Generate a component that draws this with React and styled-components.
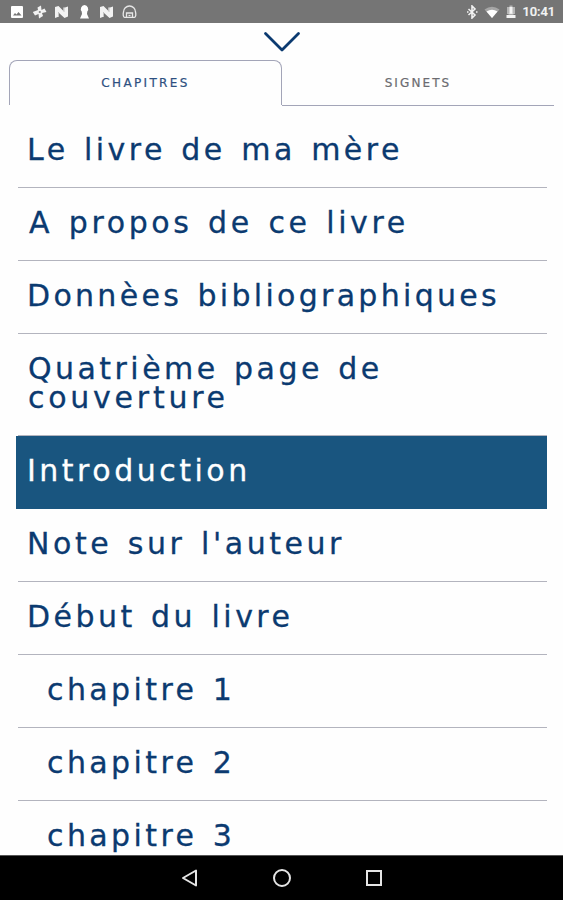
import styled, { createGlobalStyle } from 'styled-components'

const GlobalStyle = createGlobalStyle`
    * {
        box-sizing: border-box;
    }

    body {
        margin: 0;
        background: #fefefe;
    }
`

const Screen = styled.div`
    display: flex;
    flex-direction: column;
    width: 563px;
    height: 900px;
    overflow: hidden;
    background: #fefefe;
    font-family: "DejaVu Sans", sans-serif;
`

const StatusBar = styled.header`
    display: flex;
    justify-content: space-between;
    align-items: center;
    flex: none;
    height: 23px;
    padding: 1px 8px 0 9px;
    background: #757575;
    color: #f4f4f4;
`

const StatusGroup = styled.div`
    display: flex;
    align-items: center;
    gap: ${props => props.$gap};
`

const Clock = styled.span`
    margin-left: 0;
    font: 500 13px/20px Roboto, sans-serif;
    letter-spacing: -0.1px;
    -webkit-text-stroke: 0.2px;
`

const Closer = styled.button`
    display: flex;
    justify-content: center;
    flex: none;
    height: 37px;
    padding: 6px 0 0;
    border: 0;
    background: none;
`

const Tabs = styled.nav`
    display: flex;
    flex: none;
    height: 46px;
    padding: 0 9px;
`

const Tab = styled.div`
    display: flex;
    justify-content: center;
    width: ${props => props.$active ? '273px' : '272px'};
    height: ${props => props.$active ? '45px' : '46px'};
    padding-top: ${props => props.$active ? '15px' : '16px'};
    border: solid #a3a5b8;
    border-width: ${props => props.$active ? '1px 1px 0' : '0 0 1px'};
    border-radius: ${props => props.$active ? '8px 8px 0 0' : '0'};
    color: ${props => props.$active ? '#2d4f80' : '#6b6b70'};
    font-size: 12px;
    line-height: 14px;
    letter-spacing: ${props => props.$spacing};
    -webkit-text-stroke: 0.2px;
`

const ChapterList = styled.main`
    flex: 1;
    min-height: 0;
    overflow: hidden;
    padding: 8.6px 16px 0 18px;
`

const Chapter = styled.div`
    padding: 20px 0 23.1px ${props => props.$nested ? '29px' : '9px'};
    border-bottom: 1px solid #b3b4be;
    color: #0b3a70;
    font-size: 30px;
    line-height: 29px;
    word-spacing: 2.5px;
    white-space: nowrap;
    -webkit-text-stroke: 0.3px;

    ${props => props.$selected && `
        margin-left: -2px;
        padding-left: 11px;
        background: #19557f;
        border-color: #19557f;
        color: #fff;
    `}
`

const Line = styled.div`
    margin-left: ${props => props.$indent || 0}px;
    letter-spacing: ${props => props.$spacing}px;
`

const NavBar = styled.footer`
    display: flex;
    justify-content: center;
    align-items: center;
    gap: 70px;
    flex: none;
    height: 45px;
    border-top: 1px solid #555;
    background: #000;
`

const chapters = [
    { lines: [{ text: 'Le livre de ma mère', spacing: 3.45 }] },
    { lines: [{ text: 'A propos de ce livre', spacing: 3.6, indent: 2 }] },
    { lines: [{ text: 'Donnèes bibliographiques', spacing: 3.3 }] },
    { lines: [{ text: 'Quatrième page de', spacing: 3.45, indent: 1 }, { text: 'couverture', spacing: 3.75, indent: 1 }] },
    { lines: [{ text: 'Introduction', spacing: 3.5 }], selected: true },
    { lines: [{ text: "Note sur l'auteur", spacing: 3.55 }] },
    { lines: [{ text: 'Début du livre', spacing: 3.45 }] },
    { lines: [{ text: 'chapitre 1', spacing: 3.4 }], nested: true },
    { lines: [{ text: 'chapitre 2', spacing: 3.4 }], nested: true },
    { lines: [{ text: 'chapitre 3', spacing: 3.4 }], nested: true },
]

const NougatIcon = () => (
    <svg width="15" height="14" viewBox="0 0 15 14">
        <path d="M1 2 4.500 1l5 5V3L14 1.500v10L10.500 13 5 8v3.500L1 13z" fill="#f2f2f2" />
        <path d="M4.500 7v5M10 7v-5" stroke="#c4c4c4" />
    </svg>
)

function Status () {
    return (
        <StatusBar>
            <StatusGroup $gap="7.6px">
                <svg width="15" height="14" viewBox="0 0 15 14">
                    <rect x="2" y="1" width="12" height="12" rx="1" fill="#fff" />
                    <path d="M4 10.500 6 8l1.500 1.500L9.500 7l3 3.500z" fill="#757575" />
                </svg>
                <svg width="15" height="14" viewBox="0 0 15 14">
                    <path d="M6 5 5.500 2.500 9 .5 9.500 5l3-1.500L14.500 7 10 8l1 3-4 2.500L6.500 9l-3.500 1.500L.8 7z" fill="#f2f2f2" />
                    <circle cx="7.8" cy="7" r="1.1" fill="#858585" />
                </svg>
                <NougatIcon />
                <svg width="15" height="14" viewBox="0 0 15 14">
                    <path d="M7.500 0a4 4 0 0 1 2.800 6.500L10 9l2 4.500H3L5 9l-.3-2.500A4 4 0 0 1 7.500 0z" fill="#fff" />
                </svg>
                <NougatIcon />
                <svg width="15" height="14" viewBox="0 0 15 14" fill="none" stroke="#e7e7e7" strokeWidth="1.3">
                    <path d="M2.500 12.300C1 12.300 1 9 1.500 7a6 6 0 0 1 12 0c.5 2 .5 5.300-1 5.300z" />
                    <path d="M4.500 12V8h6v4" />
                    <path d="M6.500 10.500h2" />
                </svg>
            </StatusGroup>
            <StatusGroup $gap="4.5px">
                <svg width="14" height="14" viewBox="0 0 14 14" fill="none" stroke="#f2f2f2" strokeWidth="1.6">
                    <path d="m3.500 4 6.500 6-3 3V1l3 3-6.500 6" />
                    <path d="M2 7h1.500M11 7h1.500" />
                </svg>
                <svg width="16" height="14" viewBox="0 0 16 14">
                    <path d="M.5 4.500Q8-1 15.500 4.500L8 13z" fill="#a5a5a5" />
                    <path d="M2.500 6.500q5.500-3.500 11 0L8 13z" fill="#fff" />
                </svg>
                <svg width="14" height="14" viewBox="0 0 14 14">
                    <path d="M3 2h8v7H3zM5.500.5h3V2h-3z" fill="#b5b5b5" />
                    <path d="M2.500 10h9v3h-9zM5.500 2h3v7h-3z" fill="#f4f4f4" />
                    <path d="M4.500 9h5" stroke="#ddd" />
                </svg>
                <Clock>10:41</Clock>
            </StatusGroup>
        </StatusBar>
    )
}

export default function App () {
    return (
        <Screen>
            <GlobalStyle />
            <Status />
            <Closer aria-label="Fermer">
                <svg width="40" height="24" viewBox="0 0 40 24" fill="none" stroke="#0b3a70" strokeWidth="2.8" strokeLinecap="round" strokeLinejoin="round">
                    <path d="m3.500 4.500 16.500 16.500 16.500-16.500" />
                </svg>
            </Closer>
            <Tabs>
                <Tab $active $spacing="2.35px">CHAPITRES</Tab>
                <Tab $spacing="2.1px">SIGNETS</Tab>
            </Tabs>
            <ChapterList>
                {chapters.map(({ lines, nested, selected }) => (
                    <Chapter key={lines[0].text} $nested={nested} $selected={selected}>
                        {lines.map(line => (
                            <Line key={line.text} $spacing={line.spacing} $indent={line.indent}>{line.text}</Line>
                        ))}
                    </Chapter>
                ))}
            </ChapterList>
            <NavBar>
                <svg width="22" height="22" viewBox="0 0 22 22" fill="none" stroke="#e5e5e5" strokeWidth="2" strokeLinejoin="round">
                    <path d="M17 3.500v15L4 11z" />
                </svg>
                <svg width="22" height="22" viewBox="0 0 22 22" fill="none" stroke="#e5e5e5" strokeWidth="2">
                    <circle cx="11" cy="11" r="8" />
                </svg>
                <svg width="22" height="22" viewBox="0 0 22 22" fill="none" stroke="#e5e5e5" strokeWidth="2">
                    <rect x="4" y="4" width="14" height="14" />
                </svg>
            </NavBar>
        </Screen>
    )
}
